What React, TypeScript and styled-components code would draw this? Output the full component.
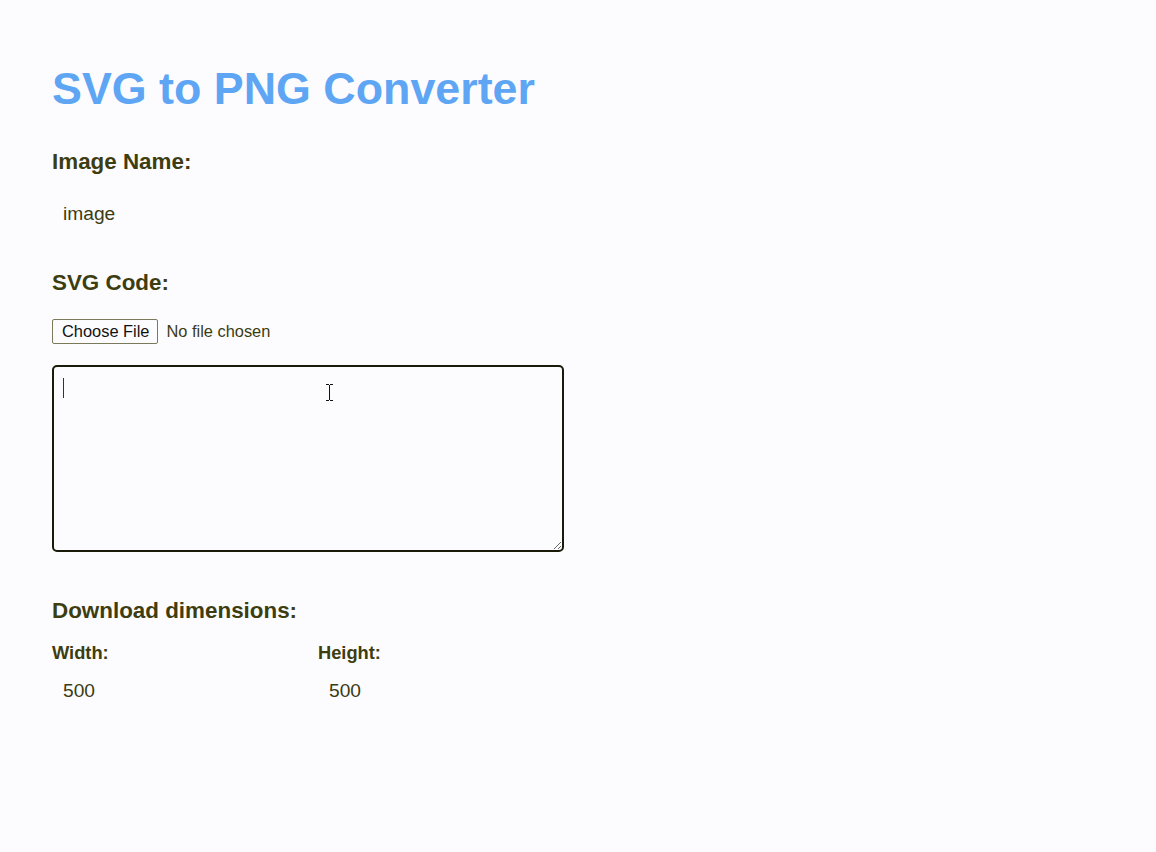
import React from "react";
import styled, { createGlobalStyle } from "styled-components";

const GlobalStyle = createGlobalStyle`
  html, body {
    margin: 0;
    padding: 0;
    background: #fcfcff;
  }
  body {
    font-family: "Liberation Sans", Arial, sans-serif;
    color: #3b3b12;
  }
  * { box-sizing: border-box; }
`;

const Page = styled.main`
  padding: 62px 52px 40px 52px;
  min-height: 852px;
  background: #fcfcff;
`;

const Title = styled.h1`
  margin: 0 0 35px 0;
  font-size: 44.8px;
  line-height: 52px;
  font-weight: 700;
  color: #5ea6f4;
`;

const Section = styled.section<{ $gap?: number }>`
  display: flex;
  flex-direction: column;
  align-items: flex-start;
  margin-bottom: ${(p) => p.$gap ?? 0}px;
`;

const Label = styled.label`
  display: block;
  font-size: 22.4px;
  line-height: 26px;
  font-weight: 700;
  color: #3d3d10;
`;

const SmallLabel = styled.label`
  display: block;
  font-size: 18.3px;
  line-height: 22px;
  font-weight: 700;
  color: #3d3d10;
`;

const TextInput = styled.input<{ $top: number }>`
  display: block;
  margin-top: ${(p) => p.$top}px;
  border: none;
  outline: none;
  background: transparent;
  font-family: "Liberation Sans", Arial, sans-serif;
  font-size: 19.2px;
  line-height: 22px;
  padding: 10px 11px;
  color: #3b3b12;
  width: 240px;
`;

const FileInput = styled.input`
  display: block;
  margin-top: 23px;
  font-family: "Liberation Sans", Arial, sans-serif;
  font-size: 16.4px;
  color: #3b3b12;
  height: 25px;

  &::file-selector-button {
    font-family: "Liberation Sans", Arial, sans-serif;
    font-size: 16.4px;
    color: #111;
    background: #fcfcff;
    border: 1px solid #7a7a5a;
    border-radius: 2px;
    height: 25px;
    padding: 0 8px 0 9px;
    margin-right: 8px;
  }
`;

const TextAreaWrap = styled.div`
  position: relative;
  margin-top: 21px;
`;

const CodeArea = styled.textarea`
  display: block;
  width: 512px;
  height: 187px;
  border: 2px solid #1a1a08;
  border-radius: 5px;
  background: #fcfcff;
  padding: 10px;
  font-family: "Liberation Mono", monospace;
  font-size: 16px;
  outline: none;
`;

const Caret = styled.span`
  position: absolute;
  left: 11px;
  top: 13px;
  width: 1px;
  height: 20px;
  background: #333;
`;

const Cursor = styled.svg`
  position: absolute;
  left: 273px;
  top: 19px;
`;

const Subtitle = styled.h2`
  margin: 0 0 18px 0;
  font-size: 22.4px;
  line-height: 26px;
  font-weight: 700;
  color: #3d3d10;
`;

const DimGrid = styled.div`
  display: grid;
  grid-template-columns: 266px 266px;
`;

const DimField = styled.div`
  display: flex;
  flex-direction: column;
`;

export default function App() {
  return (
    <>
      <GlobalStyle />
      <Page>
        <Title>SVG to PNG Converter</Title>

        <Section $gap={35}>
          <Label htmlFor="name">Image Name:</Label>
          <TextInput id="name" defaultValue="image" $top={18} />
        </Section>

        <Section $gap={46}>
          <Label htmlFor="code">SVG Code:</Label>
          <FileInput type="file" accept=".svg" />
          <TextAreaWrap>
            <CodeArea id="code" />
            <Caret />
            <Cursor width="9" height="17" viewBox="0 0 9 17">
              <path d="M1 0.5h3M5 0.5h3M4.5 1v15M1 16.5h3M5 16.5h3" stroke="#111" strokeWidth="1" fill="none" />
            </Cursor>
          </TextAreaWrap>
        </Section>

        <Section>
          <Subtitle>Download dimensions:</Subtitle>
          <DimGrid>
            <DimField>
              <SmallLabel htmlFor="w">Width:</SmallLabel>
              <TextInput id="w" defaultValue="500" $top={6} />
            </DimField>
            <DimField>
              <SmallLabel htmlFor="h">Height:</SmallLabel>
              <TextInput id="h" defaultValue="500" $top={6} />
            </DimField>
          </DimGrid>
        </Section>
      </Page>
    </>
  );
}
